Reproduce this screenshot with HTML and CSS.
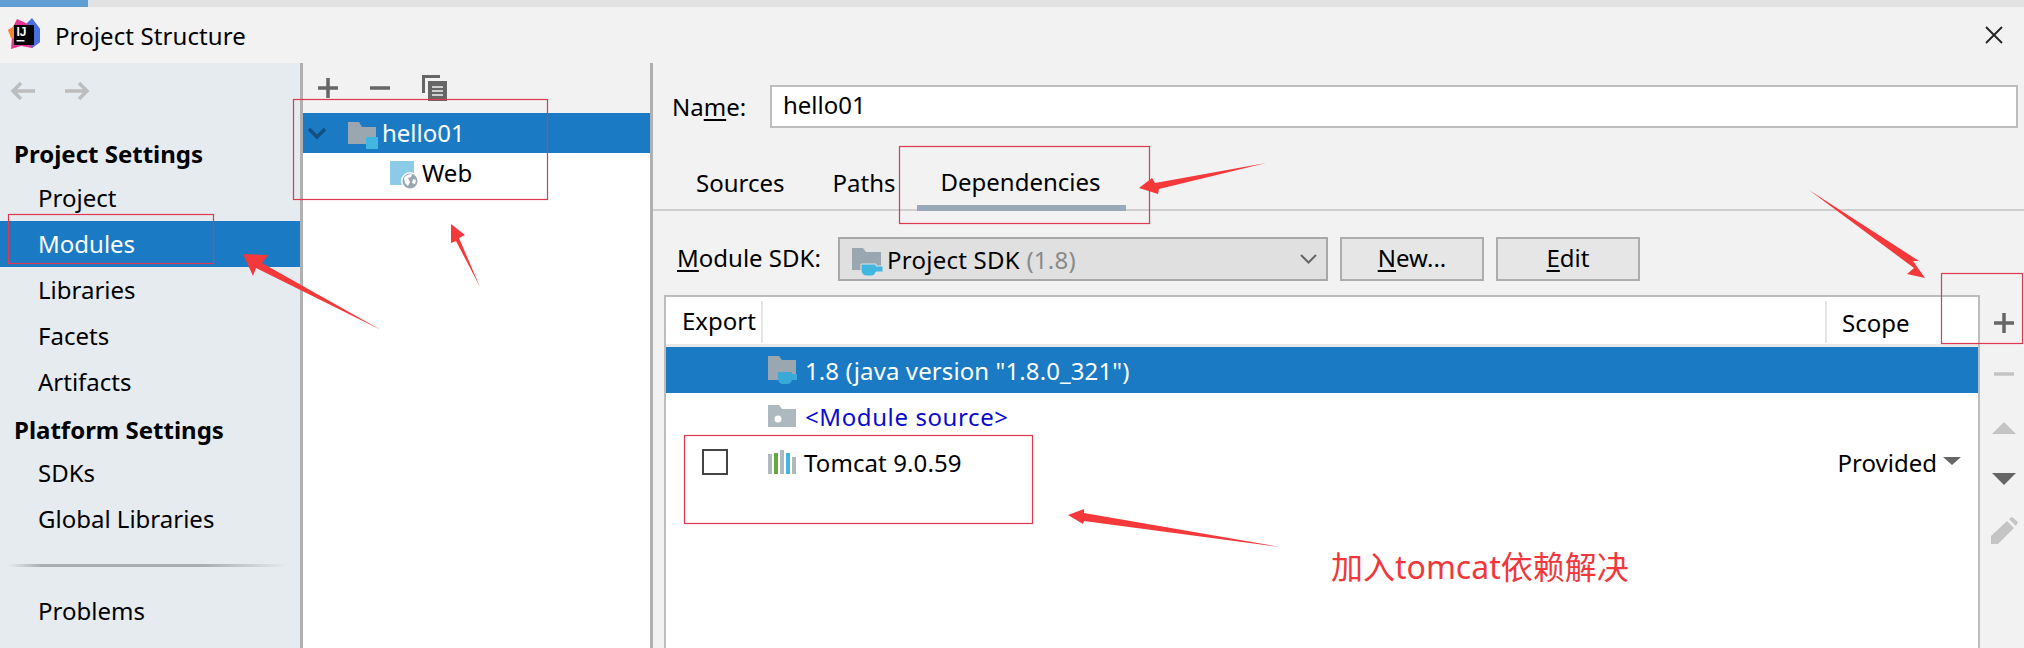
FILE: index.html
```html
<!DOCTYPE html>
<html lang="en">
<head>
<meta charset="utf-8">
<title>Project Structure</title>
<link rel="stylesheet" href="styles.css">
</head>
<body>
<div class="win">
  <div class="strip"><div class="strip-blue"></div></div>
  <header class="titlebar">
    <svg class="logo" width="32" height="32" viewBox="0 0 32 32">
      <path d="M9 1 20 6 24 1 32 11 32 24 24 30 13 28 3 31 4 19 0 12 5 9Z" fill="#e5358f"/>
      <path d="M19 5 24 0 32 11 32 24 24 30 18 20Z" fill="#4a6fe0"/>
      <path d="M0 12 7 8 10 22 3 20Z" fill="#f58a25"/>
      <rect x="6" y="7" width="20" height="20" fill="#000"/>
      <text x="8.500" y="18" class="logo-text">IJ</text>
      <rect x="8.500" y="22" width="8" height="1.500" fill="#fff"/>
    </svg>
    <span class="title">Project Structure</span>
    <svg class="close" width="18" height="18" viewBox="0 0 18 18"><path d="M1 1 17 17M17 1 1 17" stroke="#222" stroke-width="1.800"/></svg>
  </header>
  <div class="main">
    <nav class="sidebar">
      <div class="nav-arrows">
        <svg width="26" height="20" viewBox="0 0 26 20"><path d="M25 10H3M11 2 3 10 11 18" fill="none" stroke="#bdbdbd" stroke-width="3.500"/></svg>
        <svg width="26" height="20" viewBox="0 0 26 20"><path d="M1 10H23M15 2 23 10 15 18" fill="none" stroke="#bdbdbd" stroke-width="3.500"/></svg>
      </div>
      <div class="nav-head nav-head-first">Project Settings</div>
      <div class="nav-item">Project</div>
      <div class="nav-item nav-sel">Modules</div>
      <div class="nav-item">Libraries</div>
      <div class="nav-item">Facets</div>
      <div class="nav-item">Artifacts</div>
      <div class="nav-head nav-head-second">Platform Settings</div>
      <div class="nav-item">SDKs</div>
      <div class="nav-item">Global Libraries</div>
      <div class="nav-sep"></div>
      <div class="nav-item">Problems</div>
    </nav>
    <section class="tree">
      <div class="tree-tools">
        <svg width="20" height="20" viewBox="0 0 20 20"><path d="M10 0V20M0 10H20" stroke="#666" stroke-width="3.500"/></svg>
        <svg width="20" height="20" viewBox="0 0 20 20"><path d="M0 10H20" stroke="#666" stroke-width="3.500"/></svg>
        <svg width="25" height="26" viewBox="0 0 25 26"><path d="M1.500 18V1.500H18" fill="none" stroke="#666" stroke-width="3"/><rect x="6" y="6" width="19" height="20" fill="#666"/><path d="M10 12H21M10 16H21M10 20H21" stroke="#f2f2f2" stroke-width="1.500"/></svg>
      </div>
      <div class="tree-body">
        <div class="tree-row tree-sel">
          <svg class="chev" width="20" height="12" viewBox="0 0 20 12"><path d="M2 2 10 10 18 2" fill="none" stroke="#134f80" stroke-width="3.500"/></svg>
          <svg class="tree-icon" width="31" height="29" viewBox="0 0 31 29"><path d="M0 1H11L14 6H28V23H0Z" fill="#9aa7b0"/><rect x="18" y="16" width="12" height="12" fill="#40b6e0"/></svg>
          <span>hello01</span>
        </div>
        <div class="tree-row tree-child">
          <svg class="web-icon" width="29" height="28" viewBox="0 0 29 28"><rect width="24" height="24" fill="#8ccbe8"/><circle cx="20" cy="20" r="9" fill="#fff"/><circle cx="20" cy="20" r="7.500" fill="#9aa7b0"/><path d="M14 17C16 14 19 13 22 13L21 16 18 17 20 21 18 25 15 22ZM23 18 26 19 25 23 22 22Z" fill="#fff"/></svg>
          <span>Web</span>
        </div>
      </div>
    </section>
    <section class="detail">
      <div class="name-row">
        <label class="name-label">Na<u>m</u>e:</label>
        <div class="name-input">hello01</div>
      </div>
      <div class="tabs">
        <span class="tab tab-sources">Sources</span>
        <span class="tab tab-paths">Paths</span>
        <span class="tab tab-active">Dependencies</span>
      </div>
      <div class="sdk-row">
        <label class="sdk-label"><u>M</u>odule SDK:</label>
        <div class="combo">
          <svg class="combo-icon" width="31" height="28" viewBox="0 0 31 28"><path d="M0 0H11L14 4H29V22H0Z" fill="#9aa7b0"/><path d="M9 16H24V18H31V24H24C23 27 21 28 19 28H15C11 28 9 25 9 21Z" fill="#40b6e0" stroke="#e0e0e0"/></svg>
          <span class="combo-text">Project SDK <span class="muted">(1.8)</span></span>
          <svg class="combo-chev" width="17" height="10" viewBox="0 0 17 10"><path d="M1 1 8.500 8.500 16 1" fill="none" stroke="#666" stroke-width="2"/></svg>
        </div>
        <div class="btn"><u>N</u>ew...</div>
        <div class="btn"><u>E</u>dit</div>
      </div>
      <div class="table-wrap">
        <div class="table">
          <div class="thead">
            <span class="th-export">Export</span>
            <span class="th-mid"></span>
            <span class="th-scope">Scope</span>
          </div>
          <div class="trow trow-sel">
            <span class="c-check"></span>
            <svg class="c-icon" width="29" height="29" viewBox="0 0 29 29"><path d="M0 0H11L14 4H28V24H0Z" fill="#9aa7b0"/><path d="M10 16H24V18H29V24H24C23 27 21 28 19 28H15C12 28 10 26 10 21Z" fill="#3ba9d8"/></svg>
            <span class="wide">1.8 (java version "1.8.0_321")</span>
          </div>
          <div class="trow">
            <span class="c-check"></span>
            <svg class="c-icon" width="29" height="23" viewBox="0 0 29 23"><path d="M0 0H11L14 4H28V22H0Z" fill="#aeb8bf"/><circle cx="10" cy="14" r="3.500" fill="#fff"/></svg>
            <span class="link">&lt;Module source&gt;</span>
          </div>
          <div class="trow">
            <span class="c-check"><span class="checkbox"></span></span>
            <svg class="c-icon" width="28" height="24" viewBox="0 0 28 24"><rect y="4" width="4" height="20" fill="#aeb8bf"/><rect x="6" y="3" width="4" height="21" fill="#62a83a"/><rect x="12" y="0" width="4" height="24" fill="#aeb8bf"/><rect x="18" y="3" width="4" height="21" fill="#40b6e0"/><rect x="24" y="7" width="4" height="17" fill="#aeb8bf"/></svg>
            <span class="wide">Tomcat 9.0.59</span>
            <span class="scope-cell">Provided<svg width="18" height="8" viewBox="0 0 18 8"><path d="M0 0H18L9 8Z" fill="#666"/></svg></span>
          </div>
        </div>
        <div class="side-tools">
          <svg class="t-plus" width="20" height="20" viewBox="0 0 20 20"><path d="M10 0V20M0 10H20" stroke="#666" stroke-width="3.500"/></svg>
          <svg class="t-minus" width="20" height="4" viewBox="0 0 20 4"><path d="M0 2H20" stroke="#c4c4c4" stroke-width="3.500"/></svg>
          <svg class="t-up" width="24" height="12" viewBox="0 0 24 12"><path d="M0 12 12 0 24 12Z" fill="#c4c4c4"/></svg>
          <svg class="t-down" width="24" height="12" viewBox="0 0 24 12"><path d="M0 0 12 12 24 0Z" fill="#666"/></svg>
          <svg class="t-pencil" width="27" height="27" viewBox="0 0 27 27"><path d="M0 27V19L16 4 23 11 7 27ZM18 2 21 0 27 5 25 9Z" fill="#c4c4c4"/></svg>
        </div>
      </div>
    </section>
  </div>

  <svg class="marks" width="2024" height="648" viewBox="0 0 2024 648">
    <g fill="none" stroke="#e0394f" stroke-width="1.200">
      <rect x="8.500" y="214.500" width="205" height="49"/>
      <rect x="293.500" y="99.500" width="254" height="100"/>
      <rect x="899.500" y="146.500" width="250" height="77"/>
      <rect x="1941.500" y="273.500" width="81" height="70"/>
      <rect x="684.500" y="435.500" width="348" height="88"/>
    </g>
    <g fill="#f5383a">
      <path d="M243 254 268 255 262 263 381 330 256 268 253 276Z"/>
      <path d="M451 224 465 235 459 238 480 287 456 241 451 243Z"/>
      <path d="M1139 188 1152 178 1155 183 1266 163 1159 189 1158 194Z"/>
      <path d="M1925 278 1907 274 1914 268 1809 190 1919 261 1913 261Z"/>
      <path d="M1068 515 1084 509 1084 513 1280 547 1084 521 1083 524Z"/>
    </g>
  </svg>
  <div class="note">加入tomcat依赖解决</div>
</div>
</body>
</html>
```

FILE: styles.css
```css
* { box-sizing: border-box; }
html, body { margin: 0; padding: 0; }
body {
  width: 2024px;
  height: 648px;
  overflow: hidden;
  font-family: "Noto Sans", "Noto Sans CJK SC", sans-serif;
  font-size: 24px;
  color: #000;
}
.win { position: relative; width: 2024px; height: 648px; overflow: hidden; background: #f2f2f2; }
u { text-underline-offset: 3px; }

.strip { height: 7px; background: #e2e2e2; }
.strip-blue { width: 88px; height: 7px; background: #5f9ed2; }

.titlebar { height: 56px; display: flex; align-items: center; padding: 0 21px 0 8px; background: #f2f2f2; }
.logo { flex: none; margin-top: -2px; }
.title { margin-left: 15px; flex: 1; letter-spacing: 0.1px; }
.logo-text { font-family: "Liberation Sans", sans-serif; font-weight: 700; font-size: 12px; fill: #fff; }

.main { display: flex; height: 585px; }

.sidebar { width: 303px; flex: none; background: #e6ebf0; border-right: 3px solid #b0b0b0; padding-top: 13px; }
.nav-arrows { height: 30px; display: flex; gap: 28px; padding-left: 10px; align-items: center; }
.nav-head { height: 46px; line-height: 50px; padding-left: 14px; font-weight: 700; }
.nav-head-first { margin-top: 23px; }
.nav-head-second { height: 45px; }
.nav-item { height: 46px; line-height: 46px; padding-left: 38px; }
.nav-sel { background: #1a7ac4; color: #fff; }
.nav-sep { height: 3px; margin: 22px 12px 21px 8px; background: linear-gradient(90deg, #e6ebf0, #a9aeb3 12%, #a9aeb3 70%, #e6ebf0); }

.tree { width: 350px; flex: none; display: flex; flex-direction: column; border-right: 3px solid #b0b0b0; }
.tree-tools { height: 50px; display: flex; align-items: center; gap: 32px; padding-left: 15px; }
.tree-body { flex: 1; background: #fff; }
.tree-row { height: 40px; display: flex; align-items: center; }
.tree-row span { margin-top: -2px; }
.tree-sel { background: #1a7ac4; color: #fff; padding-left: 4px; }
.chev { flex: none; }
.tree-icon { margin-left: 21px; margin-top: 4px; margin-right: 3px; }
.tree-child { padding-left: 87px; gap: 3px; }
.web-icon { margin-top: 4px; }

.detail { flex: 1; min-width: 0; display: flex; flex-direction: column; }
.name-row { display: flex; align-items: center; padding-top: 22px; height: 65px; }
.name-label { margin-left: 19px; width: 98px; flex: none; white-space: nowrap; }
.name-input { width: 1248px; height: 43px; flex: none; line-height: 35px; padding-left: 11px; background: #fff; border: 2px solid #bdbdbd; }
.tabs { height: 83px; border-bottom: 2px solid #cfcfcf; display: flex; align-items: flex-end; }
.tab { display: block; height: 44px; line-height: 36px; }
.tab-sources { margin-left: 43px; }
.tab-paths { margin-left: 48px; }
.tab-active { margin-left: 21px; padding: 0 25px 0 24px; height: 50px; line-height: 42px; border-bottom: 6px solid #9aa9ba; margin-bottom: -2px; }
.sdk-row { height: 84px; padding-top: 26px; display: flex; align-items: flex-start; }
.sdk-label { margin-left: 24px; width: 161px; flex: none; line-height: 42px; white-space: nowrap; }
.combo { width: 490px; height: 44px; flex: none; display: flex; align-items: center; gap: 4px; padding-left: 12px; background: #e0e0e0; border: 2px solid #a8a8a8; }
.combo-icon { flex: none; margin-top: 6px; }
.combo-text { flex: 1; white-space: nowrap; letter-spacing: 0.25px; }
.muted { color: #8a8a8a; }
.combo-chev { margin-right: 9px; }
.btn { width: 144px; height: 44px; flex: none; margin-left: 12px; text-align: center; line-height: 38px; background: #e6e6e6; border: 2px solid #adadad; }

.table-wrap { flex: 1; display: flex; margin-left: 11px; min-height: 0; }
.table { flex: none; width: 1316px; background: #fff; border-top: 2px solid #bdbdbd; border-left: 2px solid #bdbdbd; border-right: 2px solid #bdbdbd; }
.thead { height: 50px; display: flex; align-items: center; padding-top: 3px; border-bottom: 3px solid #e8e8e8; }
.th-export { width: 97px; padding-left: 16px; height: 42px; line-height: 40px; border-right: 2px solid #e6e6e6; flex: none; }
.th-mid { flex: none; width: 1064px; height: 42px; border-right: 2px solid #e6e6e6; }
.th-scope { padding-left: 15px; }
.trow { height: 46px; display: flex; align-items: center; white-space: nowrap; }
.trow-sel { background: #1a7ac4; color: #fff; }
.c-check { width: 102px; flex: none; padding-left: 36px; display: flex; }
.c-icon { flex: none; margin-right: 8px; }
.wide { letter-spacing: 0.1px; }
.checkbox { width: 26px; height: 26px; border: 2px solid #444; background: #fff; display: block; }
.link { color: #0a0acd; letter-spacing: 0.6px; }
.scope-cell { margin-left: auto; margin-right: 17px; display: flex; align-items: center; gap: 6px; }
.scope-cell svg { margin-top: -2px; }

.side-tools { flex: 1; display: flex; flex-direction: column; align-items: center; padding-top: 18px; padding-left: 4px; }
.t-minus { margin-top: 39px; }
.t-up { margin-top: 46px; }
.t-down { margin-top: 39px; }
.t-pencil { margin-top: 32px; }

.marks { position: absolute; left: 0; top: 0; pointer-events: none; }
.note { position: absolute; left: 1331px; top: 545px; font-size: 32px; line-height: 44px; color: #f0383c; white-space: nowrap; }
```
